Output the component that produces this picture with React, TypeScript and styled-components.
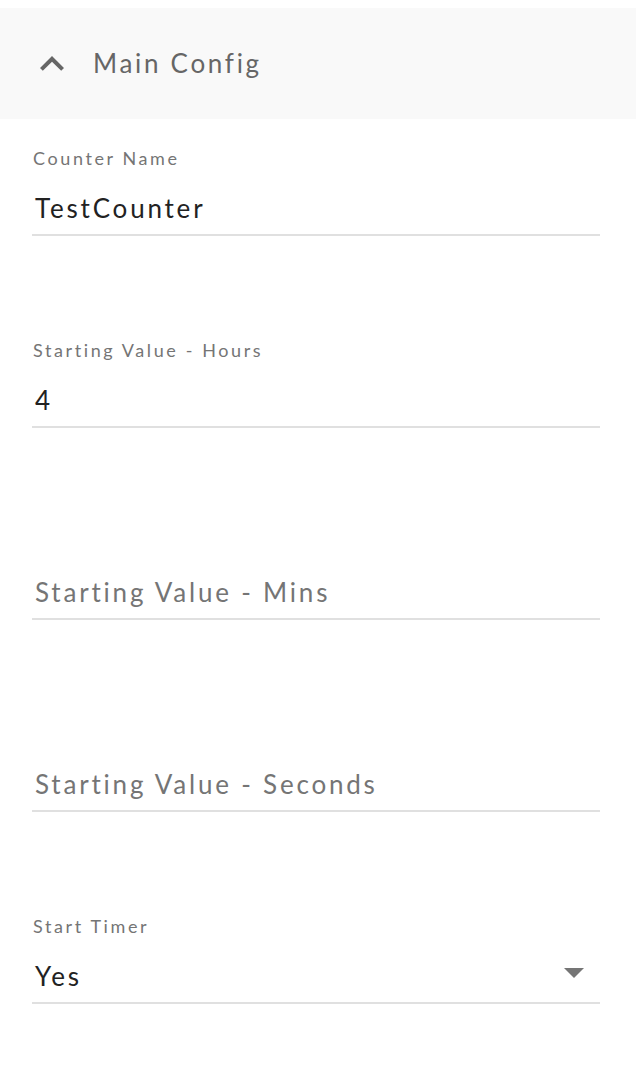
import React from "react";
import styled, { createGlobalStyle } from "styled-components";

const Global = createGlobalStyle`
  html, body { margin: 0; padding: 0; background: #fff; }
  body { padding-top: 8px; font-family: Lato, "Open Sans", sans-serif; }
  * { box-sizing: border-box; }
`;

const Page = styled.div`
  display: flex;
  flex-direction: column;
  width: 636px;
`;

const Header = styled.div`
  display: flex;
  align-items: center;
  height: 111px;
  background: #f9f9f9;
  padding-left: 28px;
  gap: 17px;
`;

const HeaderTitle = styled.span`
  font-size: 26px;
  letter-spacing: 2.7px;
  color: #666;
  margin-top: -2px;
`;

const Form = styled.div`
  display: flex;
  flex-direction: column;
  padding: 0 36px 0 32px;
`;

const Field = styled.div<{ $first?: boolean }>`
  display: flex;
  flex-direction: column;
  margin-top: ${(p) => (p.$first ? "29px" : "104px")};
`;

const Label = styled.div`
  height: 20px;
  line-height: 20px;
  font-size: 18px;
  letter-spacing: 2.6px;
  color: #757575;
  padding-left: 1px;
`;

const InputRow = styled.div`
  display: flex;
  align-items: center;
  justify-content: space-between;
  height: 68px;
  padding: 14px 16px 0 3px;
  border-bottom: 2px solid #e0e0e0;
`;

const Value = styled.span<{ $placeholder?: boolean }>`
  font-size: 26px;
  line-height: 54px;
  letter-spacing: 2.8px;
  color: ${(p) => (p.$placeholder ? "#757575" : "#222")};
`;

const CaretBox = styled.svg`
  margin-top: -6px;
`;

const Caret = () => (
  <CaretBox width="20" height="10" viewBox="0 0 20 10">
    <polygon points="0,0 20,0 10,10" fill="#757575" />
  </CaretBox>
);

const Chevron = () => (
  <svg width="48" height="48" viewBox="0 0 24 24">
    <path d="M12 8l-6 6 1.41 1.41L12 10.83l4.59 4.58L18 14z" fill="#666" />
  </svg>
);

type F = { label?: string; value?: string; placeholder?: string; select?: boolean };

const fields: F[] = [
  { label: "Counter Name", value: "TestCounter" },
  { label: "Starting Value - Hours", value: "4" },
  { placeholder: "Starting Value - Mins" },
  { placeholder: "Starting Value - Seconds" },
  { label: "Start Timer", value: "Yes", select: true },
];

export default function App() {
  return (
    <>
      <Global />
      <Page>
        <Header>
          <Chevron />
          <HeaderTitle>Main Config</HeaderTitle>
        </Header>
        <Form>
          {fields.map((f, i) => (
            <Field key={i} $first={i === 0}>
              <Label>{f.label ?? ""}</Label>
              <InputRow>
                <Value $placeholder={!f.value}>{f.value ?? f.placeholder}</Value>
                {f.select && <Caret />}
              </InputRow>
            </Field>
          ))}
        </Form>
      </Page>
    </>
  );
}
